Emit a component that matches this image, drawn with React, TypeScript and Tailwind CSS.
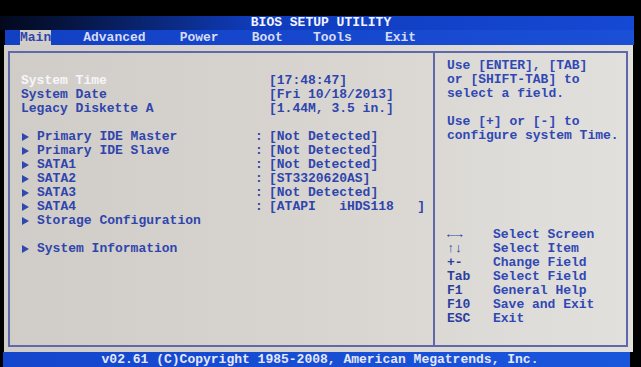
import React from "react";

const Arrow = () => (
  <span className="inline-flex w-[16px] shrink-0 items-center">
    <svg width="7" height="8" viewBox="0 0 7 8" className="ml-[1px]">
      <polygon points="0,0 7,4 0,8" fill="#3047b0" />
    </svg>
  </span>
);

type Row = { label: string; value?: string; arrow?: boolean; white?: boolean; colon?: boolean; gapBefore?: boolean };

const rows: Row[] = [
  { label: "System Time", value: "[17:48:47]", white: true },
  { label: "System Date", value: "[Fri 10/18/2013]" },
  { label: "Legacy Diskette A", value: "[1.44M, 3.5 in.]" },
  { label: "Primary IDE Master", value: "[Not Detected]", arrow: true, colon: true, gapBefore: true },
  { label: "Primary IDE Slave", value: "[Not Detected]", arrow: true, colon: true },
  { label: "SATA1", value: "[Not Detected]", arrow: true, colon: true },
  { label: "SATA2", value: "[ST3320620AS]", arrow: true, colon: true },
  { label: "SATA3", value: "[Not Detected]", arrow: true, colon: true },
  { label: "SATA4", value: "[ATAPI   iHDS118   ]", arrow: true, colon: true },
  { label: "Storage Configuration", arrow: true },
  { label: "System Information", arrow: true, gapBefore: true },
];

const legend: [string, string][] = [
  ["←→", "Select Screen"],
  ["↑↓", "Select Item"],
  ["+-", "Change Field"],
  ["Tab", "Select Field"],
  ["F1", "General Help"],
  ["F10", "Save and Exit"],
  ["ESC", "Exit"],
];

export default function App() {
  return (
    <div
      className="w-[641px] h-[367px] overflow-hidden bg-black font-bold text-[13px] leading-[14px] whitespace-pre"
      style={{ fontFamily: '"Liberation Mono", "DejaVu Sans Mono", monospace' }}
    >
      <div className="h-[16px]" />
      {/* Title bar */}
      <div className="h-[14px] mr-[7px] pl-[8px] flex items-center justify-center bg-linear-to-r from-[#03081c] via-[#0f3cbc] via-40% to-[#1548d4] text-[#f4f4ff]">
        BIOS SETUP UTILITY
      </div>
      {/* Menu bar */}
      <div className="h-[15px] ml-[5px] mr-[7px] flex items-center bg-linear-to-r from-[#1240c4] to-[#1a4fd6] pl-[15px] text-[#d6dcf2]">
        <span className="bg-[#d2cec9] text-[#2f45ad] h-[15px] flex items-center">Main</span>
        <span className="ml-[32px]">Advanced</span>
        <span className="ml-[34px]">Power</span>
        <span className="ml-[33px]">Boot</span>
        <span className="ml-[30px]">Tools</span>
        <span className="ml-[33px]">Exit</span>
      </div>
      {/* Body */}
      <div className="h-[307px] ml-[4px] mr-[8px] bg-linear-to-r from-[#d0ccc7] via-[#d8d5d0] to-[#e2e0dd] pl-[4px] pr-[5px] pt-[6px] pb-[5px] flex">
        <div className="flex flex-1 border-2 border-[#6068ac]">
          {/* Left panel */}
          <div className="w-[425px] border-r-2 border-[#6068ac] pl-[11px] pt-[21px] text-[#2f45ad] flex flex-col">
            {rows.map((r) => (
              <div key={r.label} className={`flex h-[14px] items-center ${r.gapBefore ? "mt-[14px]" : ""}`}>
                <div className={`w-[234px] flex items-center ${r.white ? "text-[#f6f6f8]" : ""}`}>
                  {r.arrow && <Arrow />}
                  <span>{r.label}</span>
                </div>
                <span className="w-[14px]">{r.colon ? ":" : ""}</span>
                {r.value && <span>{r.value}</span>}
              </div>
            ))}
          </div>
          {/* Right panel */}
          <div className="flex-1 pl-[12px] pt-[6px] text-[#3048b4] flex flex-col">
            <div>Use [ENTER], [TAB]</div>
            <div>or [SHIFT-TAB] to</div>
            <div>select a field.</div>
            <div className="mt-[14px]">Use [+] or [-] to</div>
            <div>configure system Time.</div>
            <div className="mt-[85px] flex flex-col">
              {legend.map(([k, v]) => (
                <div key={k} className="flex h-[14px] items-center">
                  <span className="w-[46px] text-[#2a3f9e]">{k}</span>
                  <span>{v}</span>
                </div>
              ))}
            </div>
          </div>
        </div>
      </div>
      {/* Footer */}
      <div className="h-[15px] ml-[3px] mr-[11px] pl-[7px] flex items-center justify-center bg-linear-to-r from-[#1446cc] to-[#1a56dc] text-[#e6e8f8]">
        v02.61 (C)Copyright 1985-2008, American Megatrends, Inc.
      </div>
    </div>
  );
}
